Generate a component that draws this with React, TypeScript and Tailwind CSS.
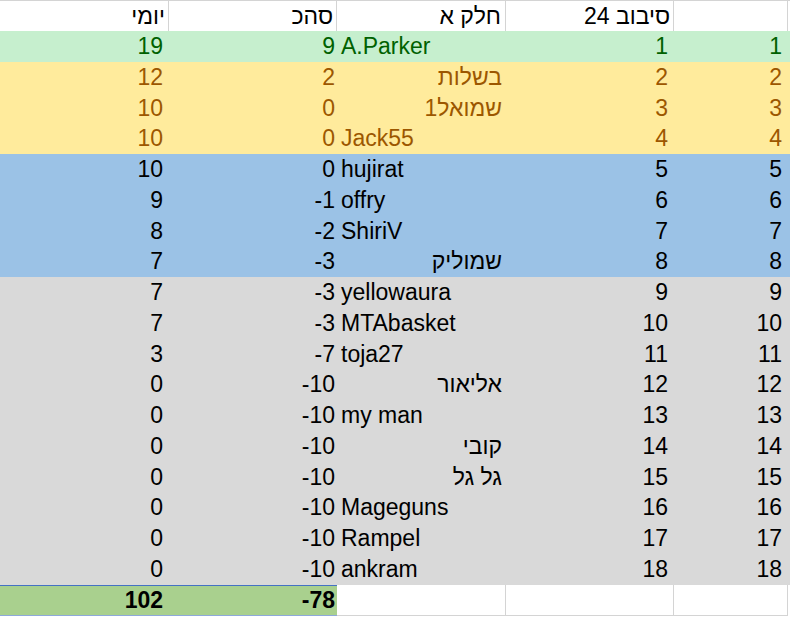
const rows: { rank: number; name: string; total: number; daily: number; tone: string }[] = [
  { rank: 1, name: 'A.Parker', total: 9, daily: 19, tone: 'green' },
  { rank: 2, name: 'בשלות', total: 2, daily: 12, tone: 'yellow' },
  { rank: 3, name: 'שמואל1', total: 0, daily: 10, tone: 'yellow' },
  { rank: 4, name: 'Jack55', total: 0, daily: 10, tone: 'yellow' },
  { rank: 5, name: 'hujirat', total: 0, daily: 10, tone: 'blue' },
  { rank: 6, name: 'offry', total: -1, daily: 9, tone: 'blue' },
  { rank: 7, name: 'ShiriV', total: -2, daily: 8, tone: 'blue' },
  { rank: 8, name: 'שמוליק', total: -3, daily: 7, tone: 'blue' },
  { rank: 9, name: 'yellowaura', total: -3, daily: 7, tone: 'gray' },
  { rank: 10, name: 'MTAbasket', total: -3, daily: 7, tone: 'gray' },
  { rank: 11, name: 'toja27', total: -7, daily: 3, tone: 'gray' },
  { rank: 12, name: 'אליאור', total: -10, daily: 0, tone: 'gray' },
  { rank: 13, name: 'my man', total: -10, daily: 0, tone: 'gray' },
  { rank: 14, name: 'קובי', total: -10, daily: 0, tone: 'gray' },
  { rank: 15, name: 'גל גל', total: -10, daily: 0, tone: 'gray' },
  { rank: 16, name: 'Mageguns', total: -10, daily: 0, tone: 'gray' },
  { rank: 17, name: 'Rampel', total: -10, daily: 0, tone: 'gray' },
  { rank: 18, name: 'ankram', total: -10, daily: 0, tone: 'gray' },
]

const toneClass: Record<string, string> = {
  green: 'bg-[#c6efce] text-[#006100]',
  yellow: 'bg-[#ffeb9c] text-[#9c5700]',
  blue: 'bg-[#9bc2e6] text-black',
  gray: 'bg-[#d9d9d9] text-black',
}

const cols = 'grid grid-cols-[169px_168px_169px_168px_114px]'

export default function App() {
  return (
    <div className="min-h-[618px] w-[790px] overflow-hidden bg-white font-['Liberation_Sans',Arial,sans-serif] text-[23px] text-black">
      {/* header */}
      <div className={`${cols} h-[31px] border-t border-[#d4d4d4] leading-[30px]`}>
        <div dir="rtl" className="border-r border-[#d4d4d4] pr-[3px] text-right">יומי</div>
        <div dir="rtl" className="border-r border-[#d4d4d4] pr-[3px] text-right">סהכ</div>
        <div dir="rtl" className="border-r border-[#d4d4d4] pr-[4px] text-right">חלק א</div>
        <div dir="rtl" className="border-r border-[#d4d4d4] pr-[3px] text-right">סיבוב 24</div>
        <div className="border-r border-[#d4d4d4]" />
      </div>

      {rows.map((r) => (
        <div key={r.rank} className={`${cols} h-[30.78px] leading-[30.78px] ${toneClass[r.tone]}`}>
          <div dir="ltr" className="pr-[6px] text-right">{r.daily}</div>
          <div dir="ltr" className="pr-[2px] text-right">{r.total}</div>
          <div dir="auto" className="truncate px-[4px] text-start">{r.name}</div>
          <div dir="ltr" className="pr-[6px] text-right">{r.rank}</div>
          <div dir="ltr" className="pr-[6px] text-right">{r.rank}</div>
        </div>
      ))}

      {/* totals */}
      <div className={`${cols} h-[31px]`}>
        <div className="col-span-2 grid grid-cols-[169px_168px] border-y border-t-[#4472c4] border-b-[#8ea9db] bg-[#a9d08e] font-bold leading-[29px]">
          <div dir="ltr" className="pr-[6px] text-right">102</div>
          <div dir="ltr" className="pr-[2px] text-right">-78</div>
        </div>
        <div className="border-r border-b border-[#d4d4d4]" />
        <div className="border-r border-b border-[#d4d4d4]" />
        <div className="border-r border-b border-[#d4d4d4]" />
      </div>
    </div>
  )
}
